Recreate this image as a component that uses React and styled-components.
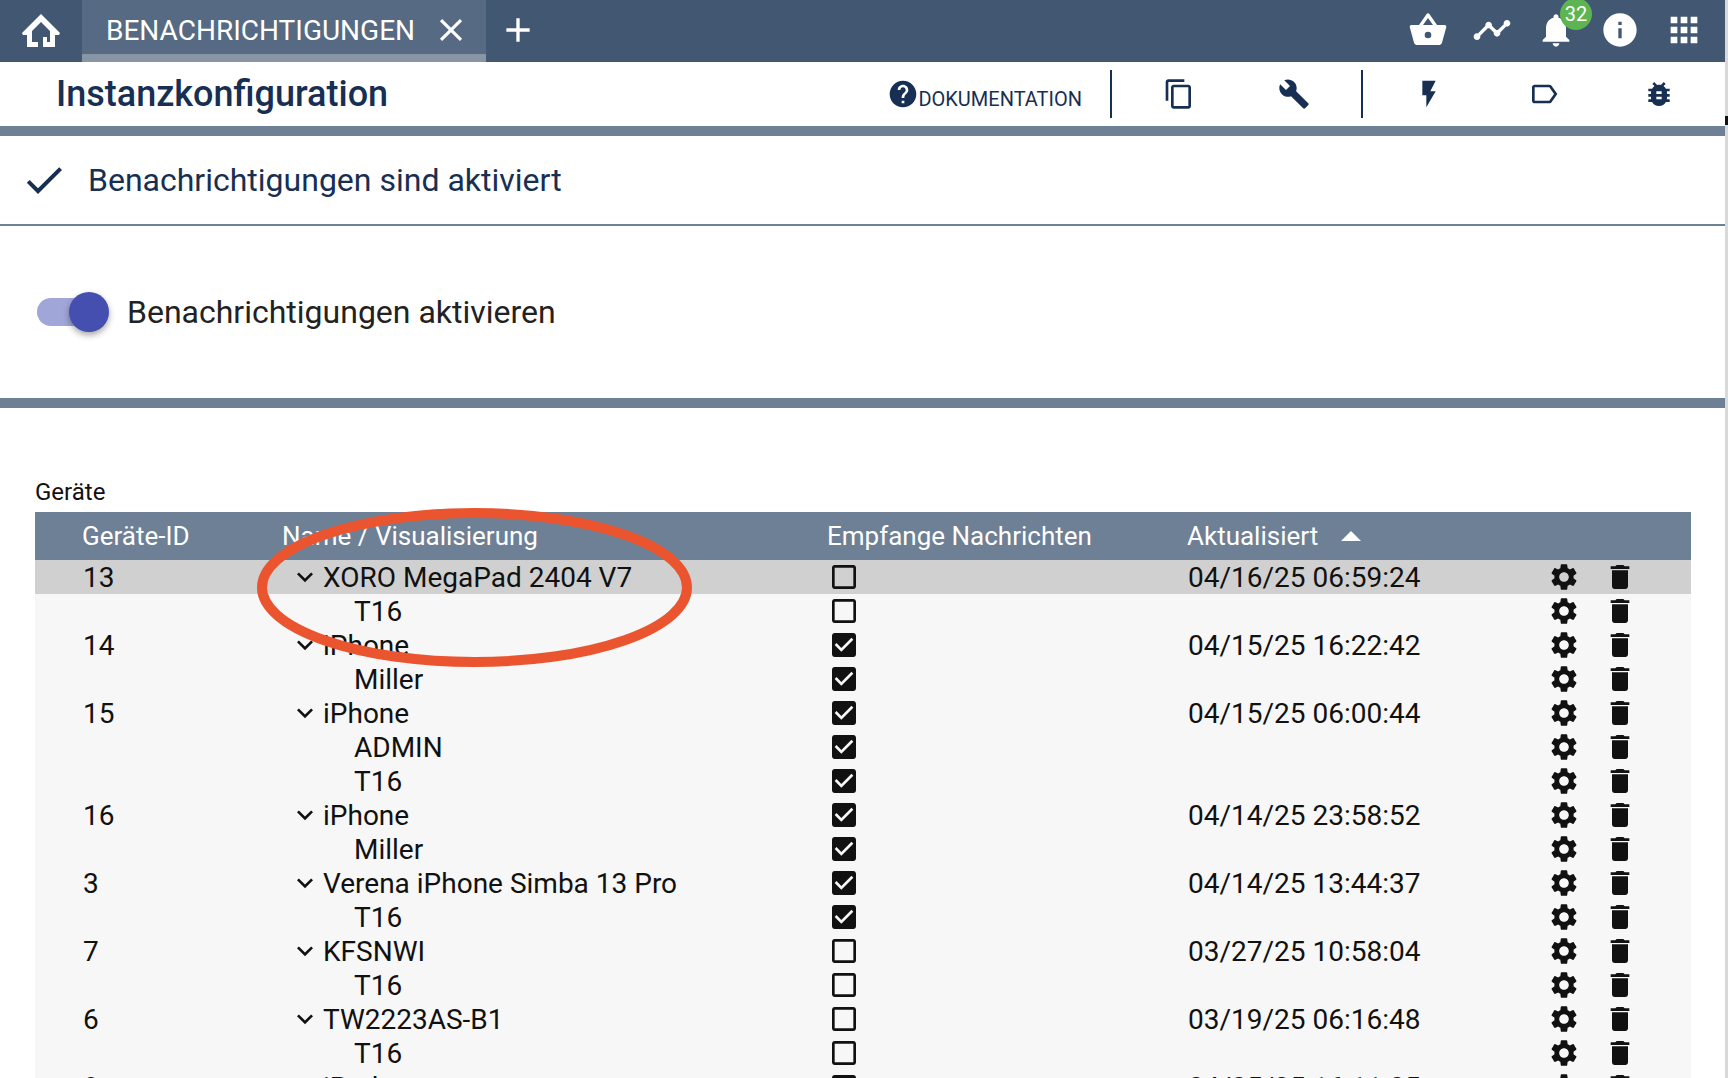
import React from 'react'
import styled, { createGlobalStyle } from 'styled-components'

const GlobalStyle = createGlobalStyle`
  html, body { margin: 0; padding: 0; background: #fff; }
  body { font-family: Roboto, "Liberation Sans", sans-serif; overflow: hidden; }
`

const paths = {
  basket: 'M5.5,21C4.72,21 4.04,20.55 3.71,19.9L1.1,10.44L1,10A1,1 0 0,1 2,9H6.58L11.18,2.43C11.36,2.17 11.66,2 12,2C12.34,2 12.65,2.17 12.83,2.44L17.42,9H22A1,1 0 0,1 23,10L22.96,10.29L20.29,19.9C19.96,20.55 19.28,21 18.5,21H5.5M12,4.74L9,9H15L12,4.74M12,13A2,2 0 0,0 10,15A2,2 0 0,0 12,17A2,2 0 0,0 14,15A2,2 0 0,0 12,13Z',
  timeline: 'M23 8c0 1.1-.9 2-2 2-.18 0-.35-.02-.51-.07l-3.56 3.55c.05.16.07.34.07.52 0 1.1-.9 2-2 2s-2-.9-2-2c0-.18.02-.36.07-.52l-2.55-2.55c-.16.05-.34.07-.52.07s-.36-.02-.52-.07l-4.55 4.56c.05.16.07.33.07.51 0 1.1-.9 2-2 2s-2-.9-2-2 .9-2 2-2c.18 0 .35.02.51.07l4.56-4.55C8.02 9.36 8 9.18 8 9c0-1.1.9-2 2-2s2 .9 2 2c0 .18-.02.36-.07.52l2.55 2.55c.16-.05.34-.07.52-.07s.36.02.52.07l3.55-3.56C19.02 8.35 19 8.18 19 8c0-1.1.9-2 2-2s2 .9 2 2z',
  bell: 'M12 22c1.1 0 2-.9 2-2h-4c0 1.1.89 2 2 2zm6-6v-5c0-3.07-1.64-5.64-4.5-6.32V4c0-.83-.67-1.5-1.5-1.5s-1.5.67-1.5 1.5v.68C7.63 5.36 6 7.92 6 11v5l-2 2v1h16v-1l-2-2z',
  info: 'M12 2C6.48 2 2 6.48 2 12s4.48 10 10 10 10-4.48 10-10S17.52 2 12 2zm1 15h-2v-6h2v6zm0-8h-2V7h2v2z',
  apps: 'M4 8h4V4H4v4zm6 12h4v-4h-4v4zm-6 0h4v-4H4v4zm0-6h4v-4H4v4zm6 0h4v-4h-4v4zm6-10v4h4V4h-4zm-6 4h4V4h-4v4zm6 6h4v-4h-4v4zm0 6h4v-4h-4v4z',
  help: 'M12 2C6.48 2 2 6.48 2 12s4.48 10 10 10 10-4.48 10-10S17.52 2 12 2zm1 17h-2v-2h2v2zm2.07-7.75l-.9.92C13.45 12.9 13 13.5 13 15h-2v-.5c0-1.1.45-2.1 1.17-2.83l1.24-1.26c.37-.36.59-.86.59-1.41 0-1.1-.9-2-2-2s-2 .9-2 2H8c0-2.21 1.79-4 4-4s4 1.79 4 4c0 .88-.36 1.68-.93 2.25z',
  copy: 'M16 1H4c-1.1 0-2 .9-2 2v14h2V3h12V1zm3 4H8c-1.1 0-2 .9-2 2v14c0 1.1.9 2 2 2h11c1.1 0 2-.9 2-2V7c0-1.1-.9-2-2-2zm0 16H8V7h11v14z',
  build: 'M22.7 19l-9.1-9.1c.9-2.3.4-5-1.5-6.9-2-2-5-2.4-7.4-1.3L9 6 6 9 1.6 4.7C.4 7.1.9 10.1 2.9 12.1c1.9 1.9 4.6 2.4 6.9 1.5l9.1 9.1c.4.4 1 .4 1.4 0l2.3-2.3c.5-.4.5-1.1.1-1.4z',
  flash: 'M7 2v11h3v9l7-12h-4l4-8z',
  label: 'M17.63 5.84C17.27 5.33 16.67 5 16 5L5 5.01C3.9 5.01 3 5.9 3 7v10c0 1.1.9 1.99 2 1.99L16 19c.67 0 1.27-.33 1.63-.84L22 12l-4.37-6.16zM16 17H5V7h11l3.55 5L16 17z',
  bug: 'M20 8h-2.81c-.45-.78-1.07-1.45-1.82-1.96L17 4.41 15.59 3l-2.17 2.17C12.96 5.06 12.49 5 12 5c-.49 0-.96.06-1.41.17L8.41 3 7 4.41l1.62 1.63C7.88 6.55 7.26 7.22 6.81 8H4v2h2.09c-.05.33-.09.66-.09 1v1H4v2h2v1c0 .34.04.67.09 1H4v2h2.81c1.04 1.79 2.97 3 5.19 3s4.15-1.21 5.19-3H20v-2h-2.09c.05-.33.09-.66.09-1v-1h2v-2h-2v-1c0-.34-.04-.67-.09-1H20V8zm-6 8h-4v-2h4v2zm0-4h-4v-2h4v2z',
  gear: 'M19.14 12.94c.04-.3.06-.61.06-.94 0-.32-.02-.64-.07-.94l2.03-1.58c.18-.14.23-.41.12-.61l-1.92-3.32c-.12-.22-.37-.29-.59-.22l-2.39.96c-.5-.38-1.03-.7-1.62-.94l-.36-2.54c-.04-.24-.24-.41-.48-.41h-3.84c-.24 0-.43.17-.47.41l-.36 2.54c-.59.24-1.13.57-1.62.94l-2.39-.96c-.22-.08-.47 0-.59.22L2.74 8.87c-.12.21-.08.47.12.61l2.03 1.58c-.05.3-.09.63-.09.94s.02.64.07.94l-2.03 1.58c-.18.14-.23.41-.12.61l1.92 3.32c.12.22.37.29.59.22l2.39-.96c.5.38 1.03.7 1.62.94l.36 2.54c.05.24.24.41.48.41h3.84c.24 0 .44-.17.47-.41l.36-2.54c.59-.24 1.13-.56 1.62-.94l2.39.96c.22.08.47 0 .59-.22l1.92-3.32c.12-.22.07-.47-.12-.61l-2.01-1.58zM12 15.6c-1.98 0-3.6-1.62-3.6-3.6s1.62-3.6 3.6-3.6 3.6 1.62 3.6 3.6-1.62 3.6-3.6 3.6z',
  trash: 'M6 19c0 1.1.9 2 2 2h8c1.1 0 2-.9 2-2V7H6v12zM19 4h-3.5l-1-1h-5l-1 1H5v2h14V4z',
  chevron: 'M16.59 8.59L12 13.17 7.41 8.59 6 10l6 6 6-6z',
  checked: 'M19 3H5c-1.11 0-2 .9-2 2v14c0 1.1.89 2 2 2h14c1.11 0 2-.9 2-2V5c0-1.1-.89-2-2-2zm-9 14l-5-5 1.41-1.41L10 14.17l7.59-7.59L19 8l-9 9z',
  unchecked: 'M19 5v14H5V5h14m0-2H5c-1.1 0-2 .9-2 2v14c0 1.1.9 2 2 2h14c1.1 0 2-.9 2-2V5c0-1.1-.9-2-2-2z',
  check: 'M9 16.17L4.83 12l-1.42 1.41L9 19 21 7l-1.41-1.41z',
  close: 'M19 6.41L17.59 5 12 10.59 6.41 5 5 6.41 10.59 12 5 17.59 6.41 19 12 13.41 17.59 19 19 17.59 13.41 12z',
  add: 'M19 13h-6v6h-2v-6H5v-2h6V5h2v6h6v2z',
}

const Svg = styled.svg`
  display: block;
  flex: none;
  fill: currentColor;
`

function Icon({ name, size = 32 }) {
  return (
    <Svg width={size} height={size} viewBox="0 0 24 24">
      <path d={paths[name]} />
    </Svg>
  )
}

const devices = [
  { id: '13', name: 'XORO MegaPad 2404 V7', on: false, date: '04/16/25 06:59:24', active: true },
  { name: 'T16', on: false },
  { id: '14', name: 'iPhone', on: true, date: '04/15/25 16:22:42' },
  { name: 'Miller', on: true },
  { id: '15', name: 'iPhone', on: true, date: '04/15/25 06:00:44' },
  { name: 'ADMIN', on: true },
  { name: 'T16', on: true },
  { id: '16', name: 'iPhone', on: true, date: '04/14/25 23:58:52' },
  { name: 'Miller', on: true },
  { id: '3', name: 'Verena iPhone Simba 13 Pro', on: true, date: '04/14/25 13:44:37' },
  { name: 'T16', on: true },
  { id: '7', name: 'KFSNWI', on: false, date: '03/27/25 10:58:04' },
  { name: 'T16', on: false },
  { id: '6', name: 'TW2223AS-B1', on: false, date: '03/19/25 06:16:48' },
  { name: 'T16', on: false },
  { id: '8', name: 'iPad', on: true, date: '04/05/25 16:11:05' },
]

export default function App() {
  return (
    <Page>
      <GlobalStyle />
      <Main>
        <TopBar>
          <HomeTile>
            <svg width="38" height="33" viewBox="0 0 38 33" fill="currentColor">
              <path fillRule="evenodd" d="M19 0 L38 19 L37 21 H33 V33 H21 V23 H25 V28 H28 V17 L19 8 L10 17 V28 H16 V33 H5 V21 H1 L0 19 Z" />
            </svg>
          </HomeTile>
          <Tab>
            <TabLabel>BENACHRICHTIGUNGEN</TabLabel>
            <Icon name="close" size={38} />
          </Tab>
          <AddTab>
            <Icon name="add" size={40} />
          </AddTab>
          <TopIcons>
            <TopIcon><Icon name="basket" size={40} /></TopIcon>
            <TopIcon><Icon name="timeline" size={40} /></TopIcon>
            <TopIcon>
              <Icon name="bell" size={40} />
              <Badge>32</Badge>
            </TopIcon>
            <TopIcon><Icon name="info" size={40} /></TopIcon>
            <TopIcon><Icon name="apps" size={40} /></TopIcon>
          </TopIcons>
        </TopBar>

        <TitleRow>
          <Title>Instanzkonfiguration</Title>
          <Toolbar>
            <DocLink>
              <Icon name="help" size={32} />
              <DocLabel>DOKUMENTATION</DocLabel>
            </DocLink>
            <ToolGroup>
              <ToolButton><Icon name="copy" /></ToolButton>
              <ToolButton><Icon name="build" /></ToolButton>
            </ToolGroup>
            <ToolGroup>
              <ToolButton><Icon name="flash" /></ToolButton>
              <ToolButton><Icon name="label" /></ToolButton>
              <ToolButton><Icon name="bug" /></ToolButton>
            </ToolGroup>
          </Toolbar>
        </TitleRow>
        <ThickRule />

        <StatusRow>
          <Icon name="check" size={48} />
          <StatusText>Benachrichtigungen sind aktiviert</StatusText>
        </StatusRow>

        <ToggleRow>
          <Track>
            <Thumb />
          </Track>
          <ToggleLabel>Benachrichtigungen aktivieren</ToggleLabel>
        </ToggleRow>
        <ThickRule />

        <DeviceSection>
          <SectionLabel>Geräte</SectionLabel>
          <HeaderRow>
            <IdCell>Geräte-ID</IdCell>
            <div>Name / Visualisierung</div>
            <div>Empfange Nachrichten</div>
            <SortCell>
              Aktualisiert
              <SortArrow />
            </SortCell>
          </HeaderRow>
          {devices.map((d, i) => (
            <Row key={i} $active={d.active}>
              <IdCell><CellText>{d.id}</CellText></IdCell>
              <NameCell $child={!d.id}>
                {d.id && <Icon name="chevron" />}
                <CellText>{d.name}</CellText>
              </NameCell>
              <Icon name={d.on ? 'checked' : 'unchecked'} />
              <div><CellText>{d.date}</CellText></div>
              <ActionCell><Icon name="gear" /></ActionCell>
              <ActionCell><Icon name="trash" /></ActionCell>
            </Row>
          ))}
        </DeviceSection>
      </Main>
      <ScrollEdge>
        <ScrollMark />
      </ScrollEdge>
      <Circle width="440" height="166" viewBox="0 0 440 166">
        <ellipse cx="217.5" cy="82.5" rx="212.5" ry="74.5" />
      </Circle>
    </Page>
  )
}

const Page = styled.div`
  position: relative;
  display: flex;
  width: 1728px;
  height: 1078px;
  overflow: hidden;
  background: #fff;
`

const Main = styled.div`
  flex: 1;
  min-width: 0;
`

const ScrollEdge = styled.div`
  width: 3px;
  background: #d9d9d9;
`

const ScrollMark = styled.div`
  height: 9px;
  margin-top: 116px;
  background: #111;
`

const Circle = styled.svg`
  position: absolute;
  left: 257px;
  top: 505px;
  fill: none;
  stroke: #ea5530;
  stroke-width: 10;
`

const TopBar = styled.div`
  display: flex;
  height: 62px;
  background: #425771;
  color: #fff;
`

const HomeTile = styled.div`
  width: 82px;
  display: flex;
  align-items: center;
  justify-content: center;
  padding-bottom: 2px;
  box-sizing: border-box;
`

const Tab = styled.div`
  width: 404px;
  box-sizing: border-box;
  display: flex;
  align-items: center;
  padding: 6px 0 0 24px;
  gap: 17px;
  background: #566a83;
  border-bottom: 8px solid #8795a5;
  white-space: nowrap;
`

const TabLabel = styled.span`
  font-size: 28px;
`

const AddTab = styled.div`
  display: flex;
  align-items: center;
  padding: 0 0 2px 12px;
`

const TopIcons = styled.div`
  display: flex;
  margin-left: auto;
  margin-right: 9px;
`

const TopIcon = styled.div`
  position: relative;
  width: 64px;
  display: flex;
  align-items: center;
  justify-content: center;
  padding-bottom: 2px;
`

const Badge = styled.span`
  position: absolute;
  left: 36px;
  top: -2px;
  width: 32px;
  height: 32px;
  border-radius: 50%;
  background: #5cb551;
  font-size: 20px;
  line-height: 32px;
  text-align: center;
`

const TitleRow = styled.div`
  display: flex;
  align-items: center;
  height: 64px;
  padding-left: 56px;
  color: #172f53;
`

const Title = styled.h1`
  margin: 0;
  font-size: 36px;
  font-weight: 500;
`

const Toolbar = styled.div`
  display: flex;
  align-items: center;
  margin-left: auto;
  margin-right: 9px;
`

const DocLink = styled.div`
  display: flex;
  align-items: center;
  padding-right: 28px;
  margin-bottom: 1px;
`

const DocLabel = styled.span`
  font-size: 20px;
  margin: 10px 0 0 -1px;
`

const ToolGroup = styled.div`
  display: flex;
  height: 48px;
  padding: 0 10px 0 9px;
  border-left: 2px solid #172f53;

  &:last-child {
    padding: 0 0 0 8px;
  }
`

const ToolButton = styled.div`
  width: 115px;
  display: flex;
  align-items: center;
  justify-content: center;
`

const ThickRule = styled.div`
  height: 10px;
  background: #6e8095;
`

const StatusRow = styled.div`
  display: flex;
  align-items: center;
  height: 88px;
  padding-left: 20px;
  gap: 20px;
  color: #172f53;
  border-bottom: 2px solid #6e8095;
`

const StatusText = styled.span`
  font-size: 32px;
`

const ToggleRow = styled.div`
  display: flex;
  align-items: center;
  height: 172px;
  padding-left: 37px;
`

const Track = styled.div`
  position: relative;
  width: 64px;
  height: 28px;
  border-radius: 14px;
  background: #a0a6d8;
  margin-right: 26px;
`

const Thumb = styled.div`
  position: absolute;
  left: 32px;
  top: -6px;
  width: 40px;
  height: 40px;
  border-radius: 50%;
  background: #444fb0;
  box-shadow: 0 3px 6px rgba(0, 0, 0, 0.35);
`

const ToggleLabel = styled.span`
  font-size: 32px;
  color: #222;
`

const DeviceSection = styled.div`
  padding: 69px 34px 0 35px;
`

const SectionLabel = styled.div`
  height: 35px;
  font-size: 24px;
  line-height: 30px;
  color: #111;
`

const columns = '248px 545px 360px 1fr 56px 56px 43px'

const HeaderRow = styled.div`
  display: grid;
  grid-template-columns: ${columns};
  align-items: center;
  height: 48px;
  background: #6e8095;
  color: #fff;
  font-size: 26px;

  > * {
    margin-left: -1px;
  }
`

const Row = styled.div`
  display: grid;
  grid-template-columns: ${columns};
  grid-template-rows: 34px;
  align-items: center;
  height: 34px;
  background: ${(p) => (p.$active ? '#d0d0d0' : '#f7f7f7')};
  color: #111;
  font-size: 28px;
  line-height: 32px;
`

const IdCell = styled.div`
  padding-left: 48px;
`

const NameCell = styled.div`
  display: flex;
  align-items: center;
  gap: 2px;
  padding-left: ${(p) => (p.$child ? '71px' : '6px')};
`

const CellText = styled.span`
  display: block;
  padding-top: 2px;
`

const SortCell = styled.div`
  display: flex;
  align-items: center;
`

const SortArrow = styled.span`
  width: 0;
  height: 0;
  margin-left: 23px;
  border-left: 10px solid transparent;
  border-right: 10px solid transparent;
  border-bottom: 10px solid #fff;
`

const ActionCell = styled.div`
  display: flex;
  justify-content: center;
`
